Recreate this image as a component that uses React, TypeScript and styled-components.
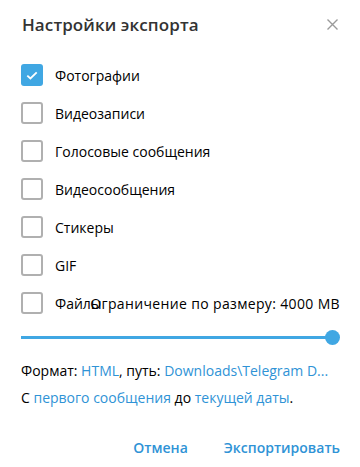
import React, { useState } from "react";
import styled, { createGlobalStyle } from "styled-components";

const GlobalStyle = createGlobalStyle`
  html, body {
    margin: 0;
    padding: 0;
    background: #ffffff;
  }
  body {
    font-family: "Open Sans", "Noto Sans", sans-serif;
    color: #000000;
  }
`;

const ACCENT = "#40a7e3";
const LINK = "#2f93d6";

type Option = { key: string; label: string };

const options: Option[] = [
  { key: "photos", label: "Фотографии" },
  { key: "videos", label: "Видеозаписи" },
  { key: "voice", label: "Голосовые сообщения" },
  { key: "round", label: "Видеосообщения" },
  { key: "stickers", label: "Стикеры" },
  { key: "gif", label: "GIF" },
];

const App: React.FC = () => {
  const [checked, setChecked] = useState<Record<string, boolean>>({ photos: true });
  const toggle = (key: string) => setChecked((c) => ({ ...c, [key]: !c[key] }));
  const limit = 100;

  return (
    <Box>
      <GlobalStyle />
      <Header>
        <Title>Настройки экспорта</Title>
        <Close aria-label="close">
          <svg width="11" height="11" viewBox="0 0 11 11">
            <path d="M0.5 0.5L10.5 10.5M10.5 0.5L0.5 10.5" stroke="#9a9a9a" strokeWidth="1.4" />
          </svg>
        </Close>
      </Header>
      <List>
        {options.map((o) => (
          <Row key={o.key} onClick={() => toggle(o.key)}>
            <Check on={!!checked[o.key]} />
            <Label>{o.label}</Label>
          </Row>
        ))}
        <Row onClick={() => toggle("files")}>
          <Check on={!!checked.files} />
          <Overlap>
            <Label>Файлы</Label>
            <Limit>Ограничение по размеру: 4000 MB</Limit>
          </Overlap>
        </Row>
      </List>
      <Slider>
        <Track>
          <Fill style={{ width: `${limit}%` }} />
        </Track>
        <Thumb />
      </Slider>
      <Info>
        <Line>
          Формат: <Link>HTML</Link>, путь: <Link>Downloads\Telegram D...</Link>
        </Line>
        <Line>
          С <Link>первого сообщения</Link> до <Link>текущей даты</Link>.
        </Line>
      </Info>
      <Footer>
        <Action>Отмена</Action>
        <Action>Экспортировать</Action>
      </Footer>
    </Box>
  );
};

const Check: React.FC<{ on: boolean }> = ({ on }) => (
  <CheckBox on={on}>
    {on && (
      <svg width="12" height="9" viewBox="0 0 12 9">
        <path d="M1.3 4.6L4.4 7.5L10.7 1.3" fill="none" stroke="#fff" strokeWidth="1.8" />
      </svg>
    )}
  </CheckBox>
);

const Box = styled.div`
  width: 360px;
  height: 467px;
  box-sizing: border-box;
  padding: 0 20px 0 21px;
  display: flex;
  flex-direction: column;
`;

const Header = styled.div`
  display: flex;
  align-items: center;
  justify-content: space-between;
  height: 48px;
  padding-left: 1px;
`;

const Title = styled.h1`
  margin: 0;
  font-size: 17px;
  font-weight: 600;
  color: #333333;
  letter-spacing: 0.1px;
`;

const Close = styled.button`
  border: 0;
  background: none;
  padding: 0;
  margin-right: 2px;
  display: flex;
  cursor: pointer;
`;

const List = styled.div`
  display: flex;
  flex-direction: column;
  gap: 16px;
  margin-top: 16px;
`;

const Row = styled.div`
  display: flex;
  align-items: center;
  gap: 12px;
  height: 22px;
  cursor: pointer;
`;

const CheckBox = styled.div<{ on: boolean }>`
  width: 22px;
  height: 22px;
  box-sizing: border-box;
  flex: none;
  border-radius: 3px;
  border: ${(p) => (p.on ? "none" : "2px solid #b0b0b0")};
  background: ${(p) => (p.on ? ACCENT : "#fff")};
  display: flex;
  align-items: center;
  justify-content: center;
`;

const Label = styled.span`
  font-size: 14px;
  color: #000;
  grid-area: 1 / 1;
  white-space: nowrap;
`;

const Overlap = styled.div`
  flex: 1;
  display: grid;
  align-items: center;
`;

const Limit = styled.span`
  grid-area: 1 / 1;
  justify-self: end;
  font-size: 14px;
  letter-spacing: 0.35px;
  color: #000;
  white-space: nowrap;
`;

const Slider = styled.div`
  display: flex;
  align-items: center;
  margin-top: 16px;
  height: 15px;
`;

const Track = styled.div`
  flex: 1;
  height: 3px;
  background: #d7e9f6;
  margin-right: -7px;
`;

const Fill = styled.div`
  height: 100%;
  background: ${ACCENT};
`;

const Thumb = styled.div`
  width: 15px;
  height: 15px;
  flex: none;
  border-radius: 50%;
  background: ${ACCENT};
`;

const Info = styled.div`
  display: flex;
  flex-direction: column;
  gap: 9px;
  margin-top: 17px;
`;

const Line = styled.div`
  font-size: 14px;
  line-height: 18px;
  color: #000;
  white-space: nowrap;
`;

const Link = styled.span`
  color: ${LINK};
`;

const Footer = styled.div`
  display: flex;
  justify-content: flex-end;
  gap: 36px;
  margin-top: 31px;
`;

const Action = styled.button`
  border: 0;
  background: none;
  padding: 0;
  font-family: "Open Sans", "Noto Sans", sans-serif;
  font-size: 14px;
  font-weight: 600;
  color: ${LINK};
  cursor: pointer;
`;

export default App;
